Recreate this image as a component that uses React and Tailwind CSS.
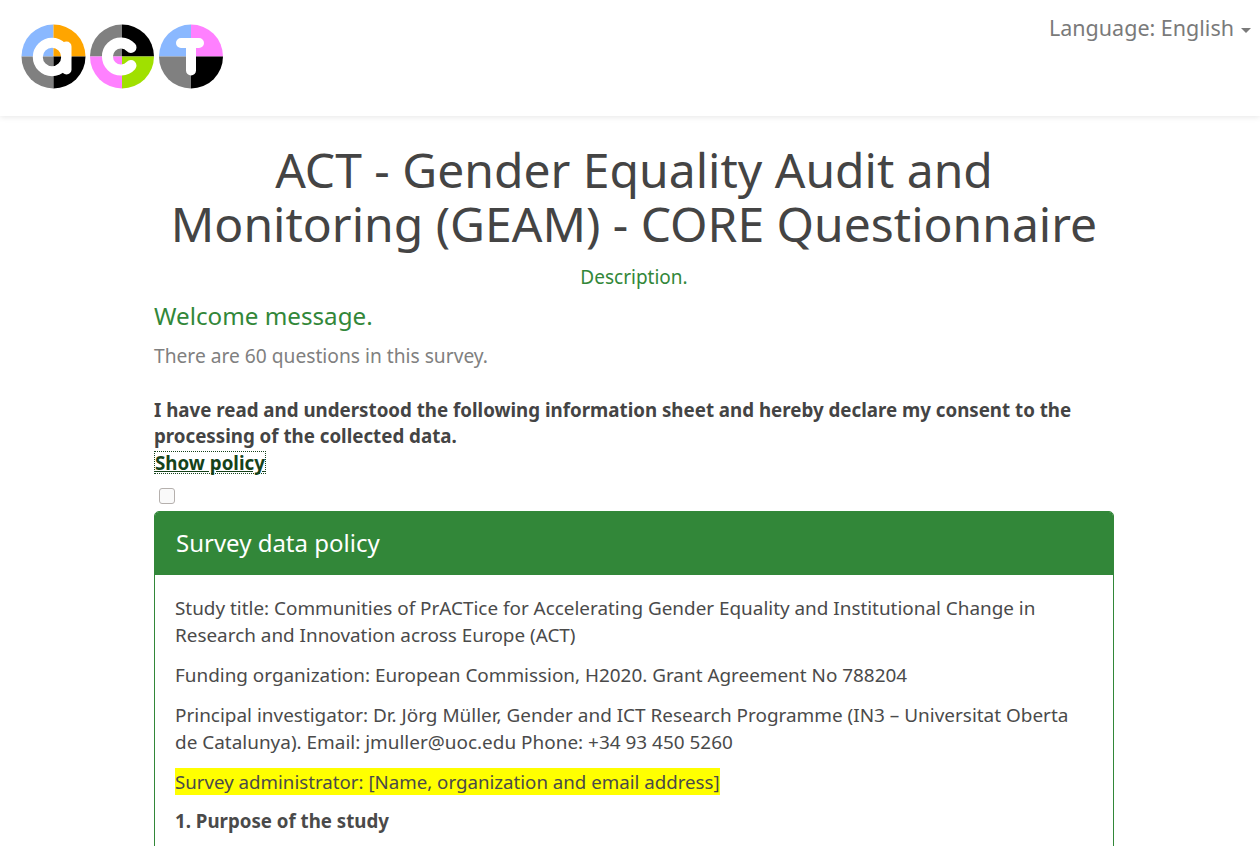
import React from "react";

const Logo = () => (
  <svg width="206" height="70" viewBox="0 0 206 70" className="block">
    {/* a */}
    <g transform="translate(32.5,34.5)">
      <path d="M0 0V-32A32 32 0 0 0 -32 0Z" fill="#8ab8ff" />
      <path d="M0 0V-32A32 32 0 0 1 32 0Z" fill="#ffa500" />
      <path d="M0 0H-32A32 32 0 0 0 0 32Z" fill="#808080" />
      <path d="M0 0H32A32 32 0 0 1 0 32Z" fill="#000000" />
      <circle cx="-1.5" cy="0.5" r="14.2" fill="none" stroke="#fff" strokeWidth="10" />
      <path d="M13 -10V13" stroke="#fff" strokeWidth="10" strokeLinecap="round" />
    </g>
    {/* c */}
    <g transform="translate(101,34.5)">
      <path d="M0 0V-32A32 32 0 0 0 -32 0Z" fill="#808080" />
      <path d="M0 0V-32A32 32 0 0 1 32 0Z" fill="#000000" />
      <path d="M0 0H-32A32 32 0 0 0 0 32Z" fill="#ff80ff" />
      <path d="M0 0H32A32 32 0 0 1 0 32Z" fill="#a0e000" />
      <path d="M9 -9A13.5 13.5 0 1 0 9 9" fill="none" stroke="#fff" strokeWidth="11" strokeLinecap="round" />
    </g>
    {/* t */}
    <g transform="translate(170,34.5)">
      <path d="M0 0V-32A32 32 0 0 0 -32 0Z" fill="#8ab8ff" />
      <path d="M0 0V-32A32 32 0 0 1 32 0Z" fill="#ff80ff" />
      <path d="M0 0H-32A32 32 0 0 0 0 32Z" fill="#808080" />
      <path d="M0 0H32A32 32 0 0 1 0 32Z" fill="#000000" />
      <path d="M-10 -13.5H8M0 -13.5V14" fill="none" stroke="#fff" strokeWidth="10" strokeLinecap="round" />
    </g>
  </svg>
);

export default function App() {
  return (
    <div className="h-[846px] overflow-hidden bg-white text-[19px] leading-[27px] text-[#444] font-['Noto_Sans',sans-serif]">
      <nav className="h-[116px] bg-white shadow-[0_1px_6px_rgba(0,0,0,0.1)] flex justify-between relative">
        <div className="pl-[21px] pt-[22px]">
          <Logo />
        </div>
        <a className="flex items-start pt-[14px] pr-[9px] text-[21.5px] leading-[27px] text-[#7a7a7a]">
          Language: English
          <span className="ml-[7px] mt-[14px] border-x-[5px] border-t-[5px] border-x-transparent border-t-[#7a7a7a]"></span>
        </a>
      </nav>

      <main className="w-[960px] ml-[154px]">
        <h1 className="mt-[27px] text-[48px] leading-[54px] text-center font-normal">
          ACT - Gender Equality Audit and
          <br />
          Monitoring (GEAM) - CORE Questionnaire
        </h1>
        <p className="mt-[13px] text-center text-[#328739]">Description.</p>
        <h2 className="mt-[9px] text-[24.2px] leading-[32px] font-normal text-[#328739]">Welcome message.</h2>
        <p className="mt-[10px] text-[19.2px] text-[#808080]">There are 60 questions in this survey.</p>

        <p className="mt-[28px] font-bold text-[18.73px] leading-[26px]">
          I have read and understood the following information sheet and hereby declare my consent to the
          <br />
          processing of the collected data.
        </p>
        <a className="block w-fit font-bold text-[18.75px] underline text-[#15421a] outline-1 outline-dotted outline-[#15421a] -outline-offset-1 h-[23px] leading-[23px] mt-[2px] px-px">
          Show policy
        </a>
        <div className="h-[22px] mt-[14px] pl-[5px]">
          <input type="checkbox" className="block w-4 h-4 m-0 appearance-none rounded-[3px] border border-[#b5b0ad] bg-[#fafafa]" />
        </div>

        <section className="mt-[1px] rounded-[5px] border border-[#328739] overflow-hidden">
          <div className="h-[63px] bg-[#328739] text-white text-[24px] leading-[62px] pl-[21px]">Survey data policy</div>
          <div className="px-[20px] pt-[20px] text-[#4a4a4a] text-[18.9px]">
            <p className="mb-[13px]">
              Study title: Communities of PrACTice for Accelerating Gender Equality and Institutional Change in
              <br />
              Research and Innovation across Europe (ACT)
            </p>
            <p className="mb-[13px]">Funding organization: European Commission, H2020. Grant Agreement No 788204</p>
            <p className="mb-[13px] text-[18.95px]">
              Principal investigator: Dr. Jörg Müller, Gender and ICT Research Programme (IN3 – Universitat Oberta
              <br />
              de Catalunya). Email: jmuller@uoc.edu Phone: +34 93 450 5260
            </p>
            <p className="mb-[12px] -mt-px text-[18.7px]">
              <span className="bg-[#ffff00] py-px">Survey administrator: [Name, organization and email address]</span>
            </p>
            <p className="mb-[13px] font-bold text-[18.7px]">1. Purpose of the study</p>
            <p className="h-[54px]"></p>
          </div>
        </section>
      </main>
    </div>
  );
}
